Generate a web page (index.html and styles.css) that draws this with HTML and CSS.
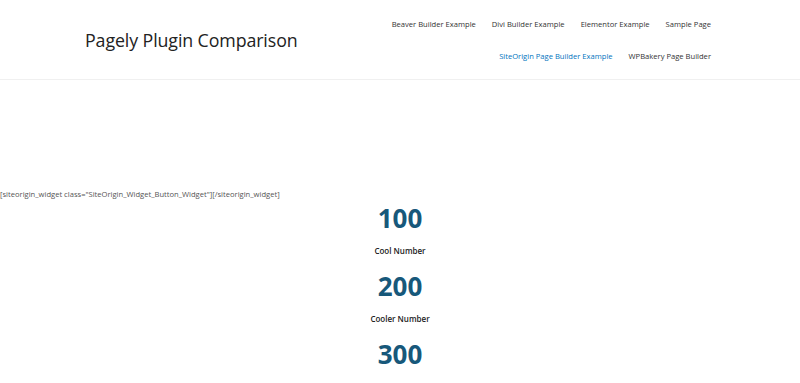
FILE: index.html
```html
<!DOCTYPE html>
<html>
<head>
<meta charset="utf-8">
<link rel="stylesheet" href="styles.css">
</head>
<body>
<header class="site-header">
  <div class="header-inner">
    <div class="branding"><a class="site-title" href="#">Pagely Plugin Comparison</a></div>
    <nav class="main-nav">
      <a href="#">Beaver Builder Example</a>
      <a href="#">Divi Builder Example</a>
      <a href="#">Elementor Example</a>
      <a href="#">Sample Page</a>
      <a href="#" class="current">SiteOrigin Page Builder Example</a>
      <a href="#">WPBakery Page Builder</a>
    </nav>
  </div>
</header>
<main class="content">
  <p class="shortcode">[siteorigin_widget class="SiteOrigin_Widget_Button_Widget"][/siteorigin_widget]</p>
  <div class="counters">
    <div class="counter"><div class="num">100</div><div class="label">Cool Number</div></div>
    <div class="counter"><div class="num">200</div><div class="label">Cooler Number</div></div>
    <div class="counter"><div class="num">300</div></div>
  </div>
</main>
</body>
</html>
```
FILE: styles.css
```css
html, body { margin: 0; padding: 0; background: #fff; }
body { font-family: "Open Sans", "Noto Sans", sans-serif; color: #222; overflow: hidden; }
a { text-decoration: none; color: inherit; }
.site-header { border-bottom: 1px solid #f0f0f0; }
.header-inner { display: flex; align-items: center; justify-content: space-between; padding: 0 89px 0 85px; height: 79px; }
.site-title { font-size: 17.8px; color: #222; letter-spacing: -0.1px; }
.main-nav { display: flex; flex-wrap: wrap; justify-content: flex-end; width: 326px; column-gap: 16px; }
.main-nav a { font-size: 7.6px; line-height: 32px; color: #333; }
.main-nav a.current { color: #0274be; }
.content { padding-top: 107px; }
.shortcode { margin: 0; font-size: 7.6px; line-height: 14px; color: #555; }
.counters { display: flex; flex-direction: column; align-items: center; }
.counter { display: flex; flex-direction: column; align-items: center; height: 68px; }
.num { font-size: 26px; font-weight: 700; color: #17587a; line-height: 34px; }
.label { font-size: 8px; font-weight: 600; color: #222; line-height: 30px; padding-top: 1px; }
```
